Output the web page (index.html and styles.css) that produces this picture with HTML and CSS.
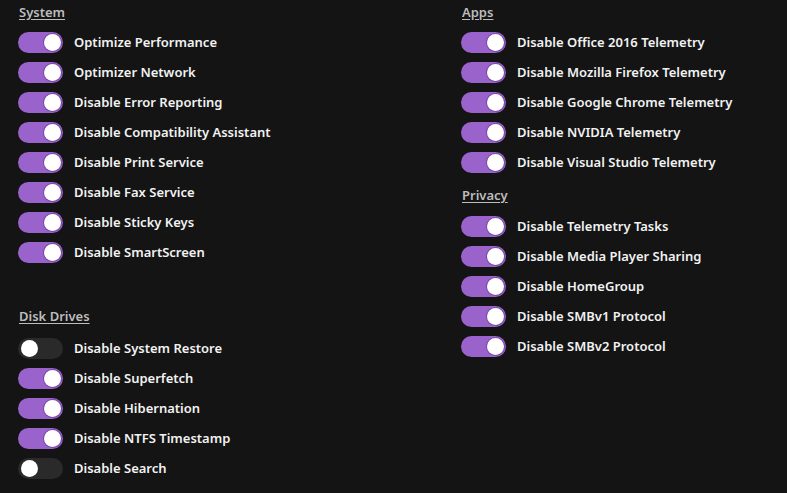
FILE: index.html
```html
<!DOCTYPE html>
<html lang="en">
<head>
  <meta charset="UTF-8">
  <title>Tweaks</title>
  <link rel="stylesheet" href="styles.css">
</head>
<body>

<div class="panel">
  <div class="column">
    <div class="section">
      <div class="heading">System</div>
      <div class="row"><span class="switch on"></span><span class="label">Optimize Performance</span></div>
      <div class="row"><span class="switch on"></span><span class="label">Optimizer Network</span></div>
      <div class="row"><span class="switch on"></span><span class="label">Disable Error Reporting</span></div>
      <div class="row"><span class="switch on"></span><span class="label">Disable Compatibility Assistant</span></div>
      <div class="row"><span class="switch on"></span><span class="label">Disable Print Service</span></div>
      <div class="row"><span class="switch on"></span><span class="label">Disable Fax Service</span></div>
      <div class="row"><span class="switch on"></span><span class="label">Disable Sticky Keys</span></div>
      <div class="row"><span class="switch on"></span><span class="label">Disable SmartScreen</span></div>
    </div>

    <div class="section disks">
      <div class="heading">Disk Drives</div>
      <div class="row"><span class="switch"></span><span class="label">Disable System Restore</span></div>
      <div class="row"><span class="switch on"></span><span class="label">Disable Superfetch</span></div>
      <div class="row"><span class="switch on"></span><span class="label">Disable Hibernation</span></div>
      <div class="row"><span class="switch on"></span><span class="label">Disable NTFS Timestamp</span></div>
      <div class="row"><span class="switch"></span><span class="label">Disable Search</span></div>
    </div>
  </div>

  <div class="column wide">
    <div class="section">
      <div class="heading">Apps</div>
      <div class="row"><span class="switch on"></span><span class="label">Disable Office 2016 Telemetry</span></div>
      <div class="row"><span class="switch on"></span><span class="label">Disable Mozilla Firefox Telemetry</span></div>
      <div class="row"><span class="switch on"></span><span class="label">Disable Google Chrome Telemetry</span></div>
      <div class="row"><span class="switch on"></span><span class="label">Disable NVIDIA Telemetry</span></div>
      <div class="row"><span class="switch on"></span><span class="label">Disable Visual Studio Telemetry</span></div>
    </div>

    <div class="section privacy">
      <div class="heading">Privacy</div>
      <div class="row"><span class="switch on"></span><span class="label">Disable Telemetry Tasks</span></div>
      <div class="row"><span class="switch on"></span><span class="label">Disable Media Player Sharing</span></div>
      <div class="row"><span class="switch on"></span><span class="label">Disable HomeGroup</span></div>
      <div class="row"><span class="switch on"></span><span class="label">Disable SMBv1 Protocol</span></div>
      <div class="row"><span class="switch on"></span><span class="label">Disable SMBv2 Protocol</span></div>
    </div>
  </div>
</div>

</body>
</html>
```

FILE: styles.css
```css
body {
  margin: 0;
  background-color: #141414;
  font-family: "Noto Sans", "Open Sans", sans-serif;
  color: #f2f2f2;
  height: 493px;
  overflow: hidden;
}
.panel {
  display: flex;
  padding-left: 18px;
}
.column {
  width: 443px;
  flex: none;
}
.column.wide {
  width: auto;
  flex: 1;
}
.heading {
  height: 27px;
  line-height: 24px;
  font-size: 13px;
  font-weight: 600;
  color: #bdbdbd;
  text-decoration: underline;
  text-underline-offset: 2px;
  padding-left: 1px;
}
.disks {
  margin-top: 37px;
}
.disks .heading {
  height: 29px;
}
.privacy {
  margin-top: 6px;
}
.privacy .heading {
  height: 28px;
}
.row {
  display: flex;
  align-items: center;
  height: 30px;
}
.label {
  font-size: 13px;
  font-weight: 600;
  margin-left: 11px;
  white-space: nowrap;
}
.switch {
  position: relative;
  width: 45px;
  height: 21px;
  border-radius: 11px;
  background-color: #2a2a2a;
  flex: none;
}
.switch::after {
  content: "";
  position: absolute;
  top: 2px;
  left: 3px;
  width: 17px;
  height: 17px;
  border-radius: 50%;
  background-color: #ffffff;
}
.switch.on {
  background-color: #9a63cc;
}
.switch.on::after {
  left: auto;
  right: 2px;
  box-shadow: 0 0 0 1px #7a45aa;
}
```
